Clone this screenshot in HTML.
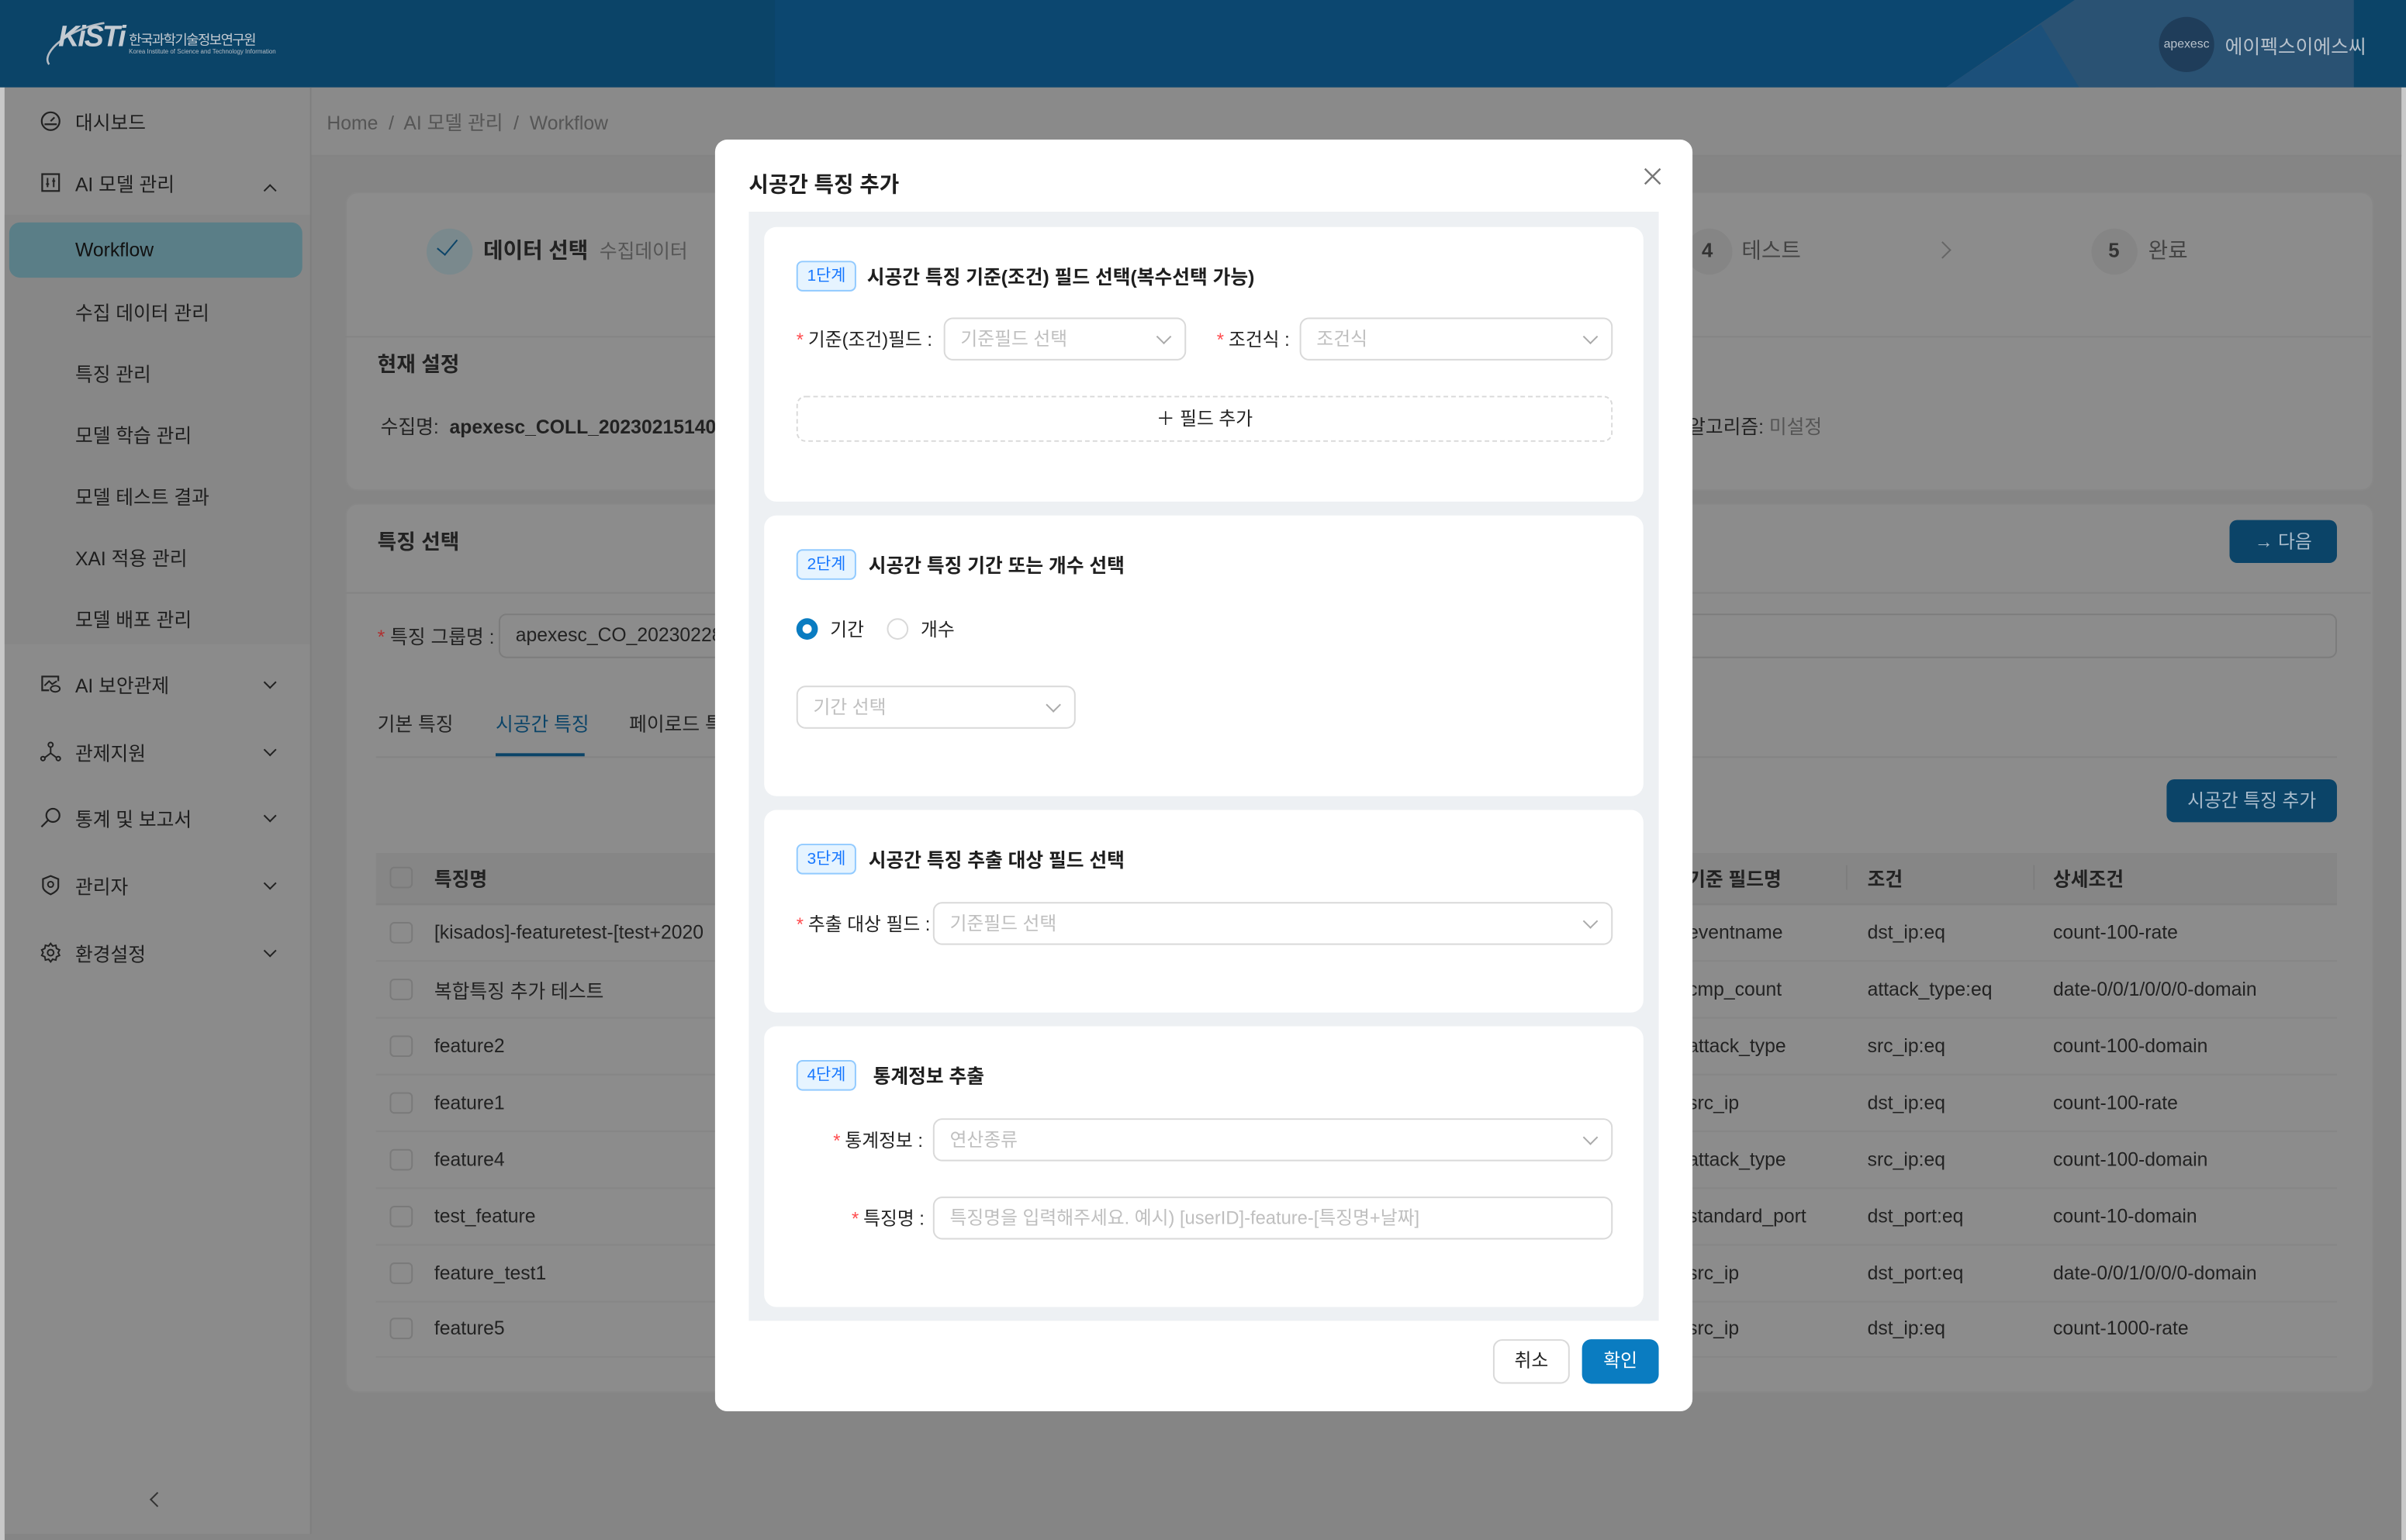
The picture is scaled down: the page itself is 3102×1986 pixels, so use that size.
<!DOCTYPE html>
<html><head><meta charset="utf-8">
<style>
html,body{margin:0;padding:0;width:3102px;height:1985px;overflow:hidden;background:#858585;}
#w{position:absolute;left:0;top:0;width:1568px;height:1004px;transform:scale(1.97832);transform-origin:0 0;font-family:"Liberation Sans","Noto Sans CJK KR",sans-serif;color:#222;}
.a{position:absolute;white-space:nowrap;}
.side{position:absolute;left:3px;top:57px;width:199px;height:943px;background:#8b8b8b;border-right:1px solid #7e7e7e;}
.mi{position:absolute;left:49px;font-size:12.5px;color:#1e1e1e;transform:translateY(-50%);}
.ic{position:absolute;left:26px;width:14px;height:14px;transform:translateY(-50%);}
.chev{position:absolute;left:173px;width:5px;height:5px;border-right:1.5px solid #222;border-bottom:1.5px solid #222;transform:translateY(-70%) rotate(45deg);}
.card{position:absolute;background:#8c8c8c;border-radius:8px;border:1px solid #878787;}
.t{position:absolute;font-size:12.5px;color:#222;transform:translateY(-50%);white-space:nowrap;}
.cb{position:absolute;left:254px;width:13px;height:12px;border:1px solid #7a7a7a;border-radius:3px;transform:translateY(-50%);}
.rowl{position:absolute;left:245px;width:1278px;height:1px;background:#868686;}
.modal{position:absolute;left:466px;top:91px;width:637px;height:829px;background:#fff;border-radius:8px;}
.sec{position:absolute;left:10px;width:573px;background:#fff;border-radius:8px;}
.tag{position:absolute;font-size:10.5px;color:#1677ff;background:#e6f4ff;border:1px solid #91caff;border-radius:4px;padding:0 6px;height:18px;line-height:18px;}
.st{position:absolute;font-size:12.5px;font-weight:bold;color:#1e1e1e;}
.lbl{position:absolute;font-size:12px;color:#222;transform:translateY(-50%);white-space:nowrap;}
.lbl b{color:#ff4d4f;font-weight:normal;margin-right:3px;}
.sel{position:absolute;height:28px;border:1px solid #d9d9d9;border-radius:6px;box-sizing:border-box;font-size:12px;color:#bfbfbf;line-height:26px;padding-left:10px;background:#fff;}
.sel i{position:absolute;right:10px;top:8px;width:6px;height:6px;border-right:1px solid #aaa;border-bottom:1px solid #aaa;transform:rotate(45deg);}
</style></head><body>
<div id="w">
<div class="a" style="left:0;top:0;width:1568px;height:57px;background:#0b4468;overflow:hidden">
  <div class="a" style="left:505px;top:0;width:900px;height:57px;background:#0c4770"></div>
  <svg class="a" style="left:0;top:0" width="1568" height="57"><polygon points="1352,0 1534,0 1534,57 1268,57" fill="#2a5273"/><polygon points="1268,57 1330,16 1355,57" fill="#14507e" opacity="0.6"/></svg>
  <div class="a" style="left:1407px;top:11px;width:36px;height:36px;border-radius:50%;background:#1f3d5a;color:#b8c2cc;font-size:8px;line-height:36px;text-align:center">apexesc</div>
  <div class="a" style="left:1450px;top:20px;font-size:12.5px;color:#b8c2cc">에이펙스이에스씨</div>
  <svg class="a" style="left:28px;top:14px" width="50" height="30"><path d="M4 28 C-2 20 18 4 40 1" stroke="#b5bcc4" stroke-width="1.3" fill="none"/></svg>
  <div class="a" style="left:38px;top:14px;font-size:19px;font-weight:bold;font-style:italic;color:#c4cbd2;letter-spacing:-1px">KiSTi</div>
  <div class="a" style="left:84px;top:19px;font-size:9px;color:#c4cbd2;letter-spacing:-0.8px">한국과학기술정보연구원</div>
  <div class="a" style="left:84px;top:31px;font-size:4px;color:#b5bcc4">Korea Institute of Science and Technology Information</div>
</div>
<div class="a" style="left:0;top:57px;width:3px;height:947px;background:#c8c8c8"></div>
<div class="a" style="left:1565px;top:57px;width:3px;height:947px;background:#c8c8c8"></div>
<div class="side"></div>
<div class="a" style="left:3px;top:140px;width:199px;height:280px;background:#878787"></div>
<svg class="ic" style="top:79px" viewBox="0 0 14 14"><circle cx="7" cy="7" r="5.8" fill="none" stroke="#222" stroke-width="1.1"/><path d="M7 7 L9.5 4.5 M3 9h8" stroke="#222" stroke-width="1.1"/></svg>
<div class="mi" style="top:79px">대시보드</div>
<svg class="ic" style="top:119px" viewBox="0 0 14 14"><rect x="1.5" y="1.5" width="11" height="11" fill="none" stroke="#222" stroke-width="1.1"/><path d="M5 4v6M9 4v6M4 8h2M8 6h2" stroke="#222" stroke-width="1"/></svg>
<div class="mi" style="top:119px">AI 모델 관리</div>
<div class="chev" style="top:123px;transform:translateY(-30%) rotate(225deg)"></div>
<div class="a" style="left:6px;top:145px;width:191px;height:36px;border-radius:7px;background:#5a7e87"></div>
<div class="mi" style="top:163px;color:#111">Workflow</div>
<div class="mi" style="top:203px">수집 데이터 관리</div>
<div class="mi" style="top:243px">특징 관리</div>
<div class="mi" style="top:283px">모델 학습 관리</div>
<div class="mi" style="top:323px">모델 테스트 결과</div>
<div class="mi" style="top:363px">XAI 적용 관리</div>
<div class="mi" style="top:403px">모델 배포 관리</div>
<svg class="ic" style="top:446px" viewBox="0 0 14 14"><path d="M12 5V2H1.5v9H6" fill="none" stroke="#222" stroke-width="1.1"/><path d="M3 8l3-3 2 2 3-2" fill="none" stroke="#222" stroke-width="1"/><ellipse cx="10" cy="10" rx="3" ry="2" fill="none" stroke="#222"/></svg>
<div class="mi" style="top:446px">AI 보안관제</div><div class="chev" style="top:446px"></div>
<svg class="ic" style="top:490px" viewBox="0 0 14 14"><circle cx="7" cy="2.5" r="1.5" fill="none" stroke="#222"/><circle cx="2" cy="11.5" r="1.3" fill="none" stroke="#222"/><circle cx="12" cy="11.5" r="1.3" fill="none" stroke="#222"/><path d="M7 4v4M3 11l4-3 4 3" fill="none" stroke="#222"/></svg>
<div class="mi" style="top:490px">관제지원</div><div class="chev" style="top:490px"></div>
<svg class="ic" style="top:533px" viewBox="0 0 14 14"><circle cx="8.5" cy="5.5" r="4.3" fill="none" stroke="#222" stroke-width="1.1"/><path d="M5.5 8.5L1 13" stroke="#222" stroke-width="1.1"/></svg>
<div class="mi" style="top:533px">통계 및 보고서</div><div class="chev" style="top:533px"></div>
<svg class="ic" style="top:577px" viewBox="0 0 14 14"><path d="M7 1l5 2v5c0 3-5 5-5 5S2 11 2 8V3z" fill="none" stroke="#222" stroke-width="1.1"/><circle cx="7" cy="6.5" r="1.8" fill="none" stroke="#222"/></svg>
<div class="mi" style="top:577px">관리자</div><div class="chev" style="top:577px"></div>
<svg class="ic" style="top:621px" viewBox="0 0 14 14"><circle cx="7" cy="7" r="2" fill="none" stroke="#222"/><path d="M7 1l1.3 1.7 2.1-.5.4 2.1 2 .9-.9 1.8.9 1.8-2 .9-.4 2.1-2.1-.5L7 13l-1.3-1.7-2.1.5-.4-2.1-2-.9.9-1.8-.9-1.8 2-.9.4-2.1 2.1.5z" fill="none" stroke="#222" stroke-width="1"/></svg>
<div class="mi" style="top:621px">환경설정</div><div class="chev" style="top:621px"></div>
<div class="a" style="left:99px;top:974px;width:6px;height:6px;border-left:1.3px solid #333;border-bottom:1.3px solid #333;transform:rotate(45deg)"></div>
<div class="a" style="left:203px;top:57px;width:1362px;height:44px;background:#8a8a8a;border-bottom:1px solid #848484"></div>
<div class="t" style="left:213px;top:79px;color:#555">Home &nbsp;/&nbsp; AI 모델 관리 &nbsp;/&nbsp; Workflow</div>
<div class="card" style="left:225px;top:125px;width:1320px;height:193px"></div>
<div class="a" style="left:225px;top:219px;width:1320px;height:1px;background:#848484"></div>
<div class="a" style="left:278px;top:149px;width:30px;height:30px;border-radius:50%;background:#7a898d"></div>
<div class="a" style="left:288px;top:153px;width:6px;height:12px;border-right:1.5px solid #0b4468;border-bottom:1.5px solid #0b4468;transform:rotate(40deg)"></div>
<div class="t" style="left:315px;top:163px;font-size:14px;font-weight:bold">데이터 선택 <span style="font-weight:normal;font-size:12.5px;color:#555">&nbsp;수집데이터</span></div>
<div class="a" style="left:1099px;top:149px;width:30px;height:30px;border-radius:50%;background:#858585"></div>
<div class="t" style="left:1109px;top:163px;font-size:13px;font-weight:bold;color:#333">4</div>
<div class="t" style="left:1135px;top:163px;font-size:14px;color:#444">테스트</div>
<div class="a" style="left:1262px;top:159px;width:7px;height:7px;border-right:1px solid #666;border-top:1px solid #666;transform:rotate(45deg)"></div>
<div class="a" style="left:1363px;top:149px;width:30px;height:30px;border-radius:50%;background:#858585"></div>
<div class="t" style="left:1374px;top:163px;font-size:13px;font-weight:bold;color:#333">5</div>
<div class="t" style="left:1400px;top:163px;font-size:14px;color:#444">완료</div>
<div class="t" style="left:246px;top:236px;font-size:13.5px;font-weight:bold">현재 설정</div>
<div class="t" style="left:248px;top:277px">수집명: &nbsp;<b>apexesc_COLL_20230215140</b></div>
<div class="t" style="left:1100px;top:277px">알고리즘: <span style="color:#555">미설정</span></div>
<div class="card" style="left:225px;top:328px;width:1320px;height:578px"></div>
<div class="a" style="left:225px;top:386px;width:1320px;height:1px;background:#848484"></div>
<div class="t" style="left:246px;top:352px;font-size:13.5px;font-weight:bold">특징 선택</div>
<div class="a" style="left:1453px;top:339px;width:70px;height:28px;border-radius:5px;background:#0b4468;color:#a9bccc;font-size:12px;line-height:28px;text-align:center">→ 다음</div>
<div class="t" style="left:246px;top:414px"><span style="color:#b03030">*</span> 특징 그룹명 :</div>
<div class="a" style="left:325px;top:400px;width:1198px;height:29px;border:1px solid #7c7c7c;border-radius:5px;box-sizing:border-box"></div>
<div class="t" style="left:336px;top:414px">apexesc_CO_20230228</div>
<div class="t" style="left:246px;top:471px">기본 특징</div>
<div class="t" style="left:323px;top:471px;color:#0b4468">시공간 특징</div>
<div class="t" style="left:410px;top:471px">페이로드 특징</div>
<div class="a" style="left:245px;top:493px;width:1278px;height:1px;background:#838383"></div>
<div class="a" style="left:323px;top:491px;width:58px;height:2px;background:#0b4468"></div>
<div class="a" style="left:1412px;top:508px;width:111px;height:28px;border-radius:5px;background:#0b4468;color:#a9bccc;font-size:12px;line-height:28px;text-align:center">시공간 특징 추가</div>
<div class="a" style="left:245px;top:556px;width:1278px;height:33px;background:#868686;border-bottom:1px solid #828282"></div>
<div class="cb" style="top:572px"></div>
<div class="t" style="left:283px;top:572px;font-weight:bold">특징명</div>
<div class="t" style="left:1100px;top:572px;font-weight:bold">기준 필드명</div>
<div class="t" style="left:1217px;top:572px;font-weight:bold">조건</div>
<div class="t" style="left:1338px;top:572px;font-weight:bold">상세조건</div>
<div class="a" style="left:1203px;top:564px;width:1px;height:16px;background:#7d7d7d"></div>
<div class="a" style="left:1325px;top:564px;width:1px;height:16px;background:#7d7d7d"></div>

<div class="cb" style="top:608px"></div><div class="t" style="left:283px;top:608px">[kisados]-featuretest-[test+2020</div><div class="t" style="left:1100px;top:608px">eventname</div><div class="t" style="left:1217px;top:608px">dst_ip:eq</div><div class="t" style="left:1338px;top:608px">count-100-rate</div><div class="rowl" style="top:626px"></div>
<div class="cb" style="top:645px"></div><div class="t" style="left:283px;top:645px">복합특징 추가 테스트</div><div class="t" style="left:1100px;top:645px">cmp_count</div><div class="t" style="left:1217px;top:645px">attack_type:eq</div><div class="t" style="left:1338px;top:645px">date-0/0/1/0/0/0-domain</div><div class="rowl" style="top:663px"></div>
<div class="cb" style="top:682px"></div><div class="t" style="left:283px;top:682px">feature2</div><div class="t" style="left:1100px;top:682px">attack_type</div><div class="t" style="left:1217px;top:682px">src_ip:eq</div><div class="t" style="left:1338px;top:682px">count-100-domain</div><div class="rowl" style="top:700px"></div>
<div class="cb" style="top:719px"></div><div class="t" style="left:283px;top:719px">feature1</div><div class="t" style="left:1100px;top:719px">src_ip</div><div class="t" style="left:1217px;top:719px">dst_ip:eq</div><div class="t" style="left:1338px;top:719px">count-100-rate</div><div class="rowl" style="top:737px"></div>
<div class="cb" style="top:756px"></div><div class="t" style="left:283px;top:756px">feature4</div><div class="t" style="left:1100px;top:756px">attack_type</div><div class="t" style="left:1217px;top:756px">src_ip:eq</div><div class="t" style="left:1338px;top:756px">count-100-domain</div><div class="rowl" style="top:774px"></div>
<div class="cb" style="top:793px"></div><div class="t" style="left:283px;top:793px">test_feature</div><div class="t" style="left:1100px;top:793px">standard_port</div><div class="t" style="left:1217px;top:793px">dst_port:eq</div><div class="t" style="left:1338px;top:793px">count-10-domain</div><div class="rowl" style="top:811px"></div>
<div class="cb" style="top:830px"></div><div class="t" style="left:283px;top:830px">feature_test1</div><div class="t" style="left:1100px;top:830px">src_ip</div><div class="t" style="left:1217px;top:830px">dst_port:eq</div><div class="t" style="left:1338px;top:830px">date-0/0/1/0/0/0-domain</div><div class="rowl" style="top:848px"></div>
<div class="cb" style="top:866px"></div><div class="t" style="left:283px;top:866px">feature5</div><div class="t" style="left:1100px;top:866px">src_ip</div><div class="t" style="left:1217px;top:866px">dst_ip:eq</div><div class="t" style="left:1338px;top:866px">count-1000-rate</div><div class="rowl" style="top:884px"></div>

<div class="modal">
  <div class="a" style="left:22px;top:19px;font-size:14px;font-weight:bold;color:#1e1e1e">시공간 특징 추가</div>
  <svg class="a" style="left:605px;top:18px" width="12" height="12"><path d="M1 1L11 11M11 1L1 11" stroke="#777" stroke-width="1.2"/></svg>
  <div class="a" style="left:22px;top:47px;width:593px;height:723px;background:#edf0f3">
    <div class="sec" style="top:10px;height:179px">
      <div class="tag" style="left:21px;top:22px">1단계</div>
      <div class="st" style="left:67px;top:22px">시공간 특징 기준(조건) 필드 선택(복수선택 가능)</div>
      <div class="lbl" style="left:21px;top:73px"><b>*</b>기준(조건)필드 :</div>
      <div class="sel" style="left:117px;top:59px;width:158px">기준필드 선택<i></i></div>
      <div class="lbl" style="left:295px;top:73px"><b>*</b>조건식 :</div>
      <div class="sel" style="left:349px;top:59px;width:204px">조건식<i></i></div>
      <div class="a" style="left:21px;top:110px;width:532px;height:30px;border:1px dashed #d9d9d9;border-radius:6px;box-sizing:border-box;text-align:center;font-size:12px;line-height:28px;color:#222">＋ 필드 추가</div>
    </div>
    <div class="sec" style="top:198px;height:183px">
      <div class="tag" style="left:21px;top:22px">2단계</div>
      <div class="st" style="left:68px;top:22px">시공간 특징 기간 또는 개수 선택</div>
      <div class="a" style="left:21px;top:67px;width:14px;height:14px;border-radius:50%;background:#0a7cc1"><div class="a" style="left:4px;top:4px;width:6px;height:6px;border-radius:50%;background:#fff"></div></div>
      <div class="lbl" style="left:43px;top:74px">기간</div>
      <div class="a" style="left:80px;top:67px;width:12px;height:12px;border-radius:50%;border:1px solid #d9d9d9"></div>
      <div class="lbl" style="left:102px;top:74px">개수</div>
      <div class="sel" style="left:21px;top:111px;width:182px">기간 선택<i></i></div>
    </div>
    <div class="sec" style="top:390px;height:132px">
      <div class="tag" style="left:21px;top:22px">3단계</div>
      <div class="st" style="left:68px;top:22px">시공간 특징 추출 대상 필드 선택</div>
      <div class="lbl" style="left:21px;top:74px"><b>*</b>추출 대상 필드 :</div>
      <div class="sel" style="left:110px;top:60px;width:443px">기준필드 선택<i></i></div>
    </div>
    <div class="sec" style="top:531px;height:183px">
      <div class="tag" style="left:21px;top:22px">4단계</div>
      <div class="st" style="left:71px;top:22px">통계정보 추출</div>
      <div class="lbl" style="left:45px;top:74px"><b>*</b>통계정보 :</div>
      <div class="sel" style="left:110px;top:60px;width:443px">연산종류<i></i></div>
      <div class="lbl" style="left:57px;top:125px"><b>*</b>특징명 :</div>
      <div class="sel" style="left:110px;top:111px;width:443px">특징명을 입력해주세요. 예시) [userID]-feature-[특징명+날짜]</div>
    </div>
  </div>
  <div class="a" style="left:507px;top:782px;width:50px;height:29px;border:1px solid #d9d9d9;border-radius:6px;box-sizing:border-box;text-align:center;line-height:27px;font-size:12px;color:#222">취소</div>
  <div class="a" style="left:565px;top:782px;width:50px;height:29px;border-radius:6px;background:#0a7cc1;text-align:center;line-height:29px;font-size:12px;color:#fff">확인</div>
</div>
</div>
</body></html>
